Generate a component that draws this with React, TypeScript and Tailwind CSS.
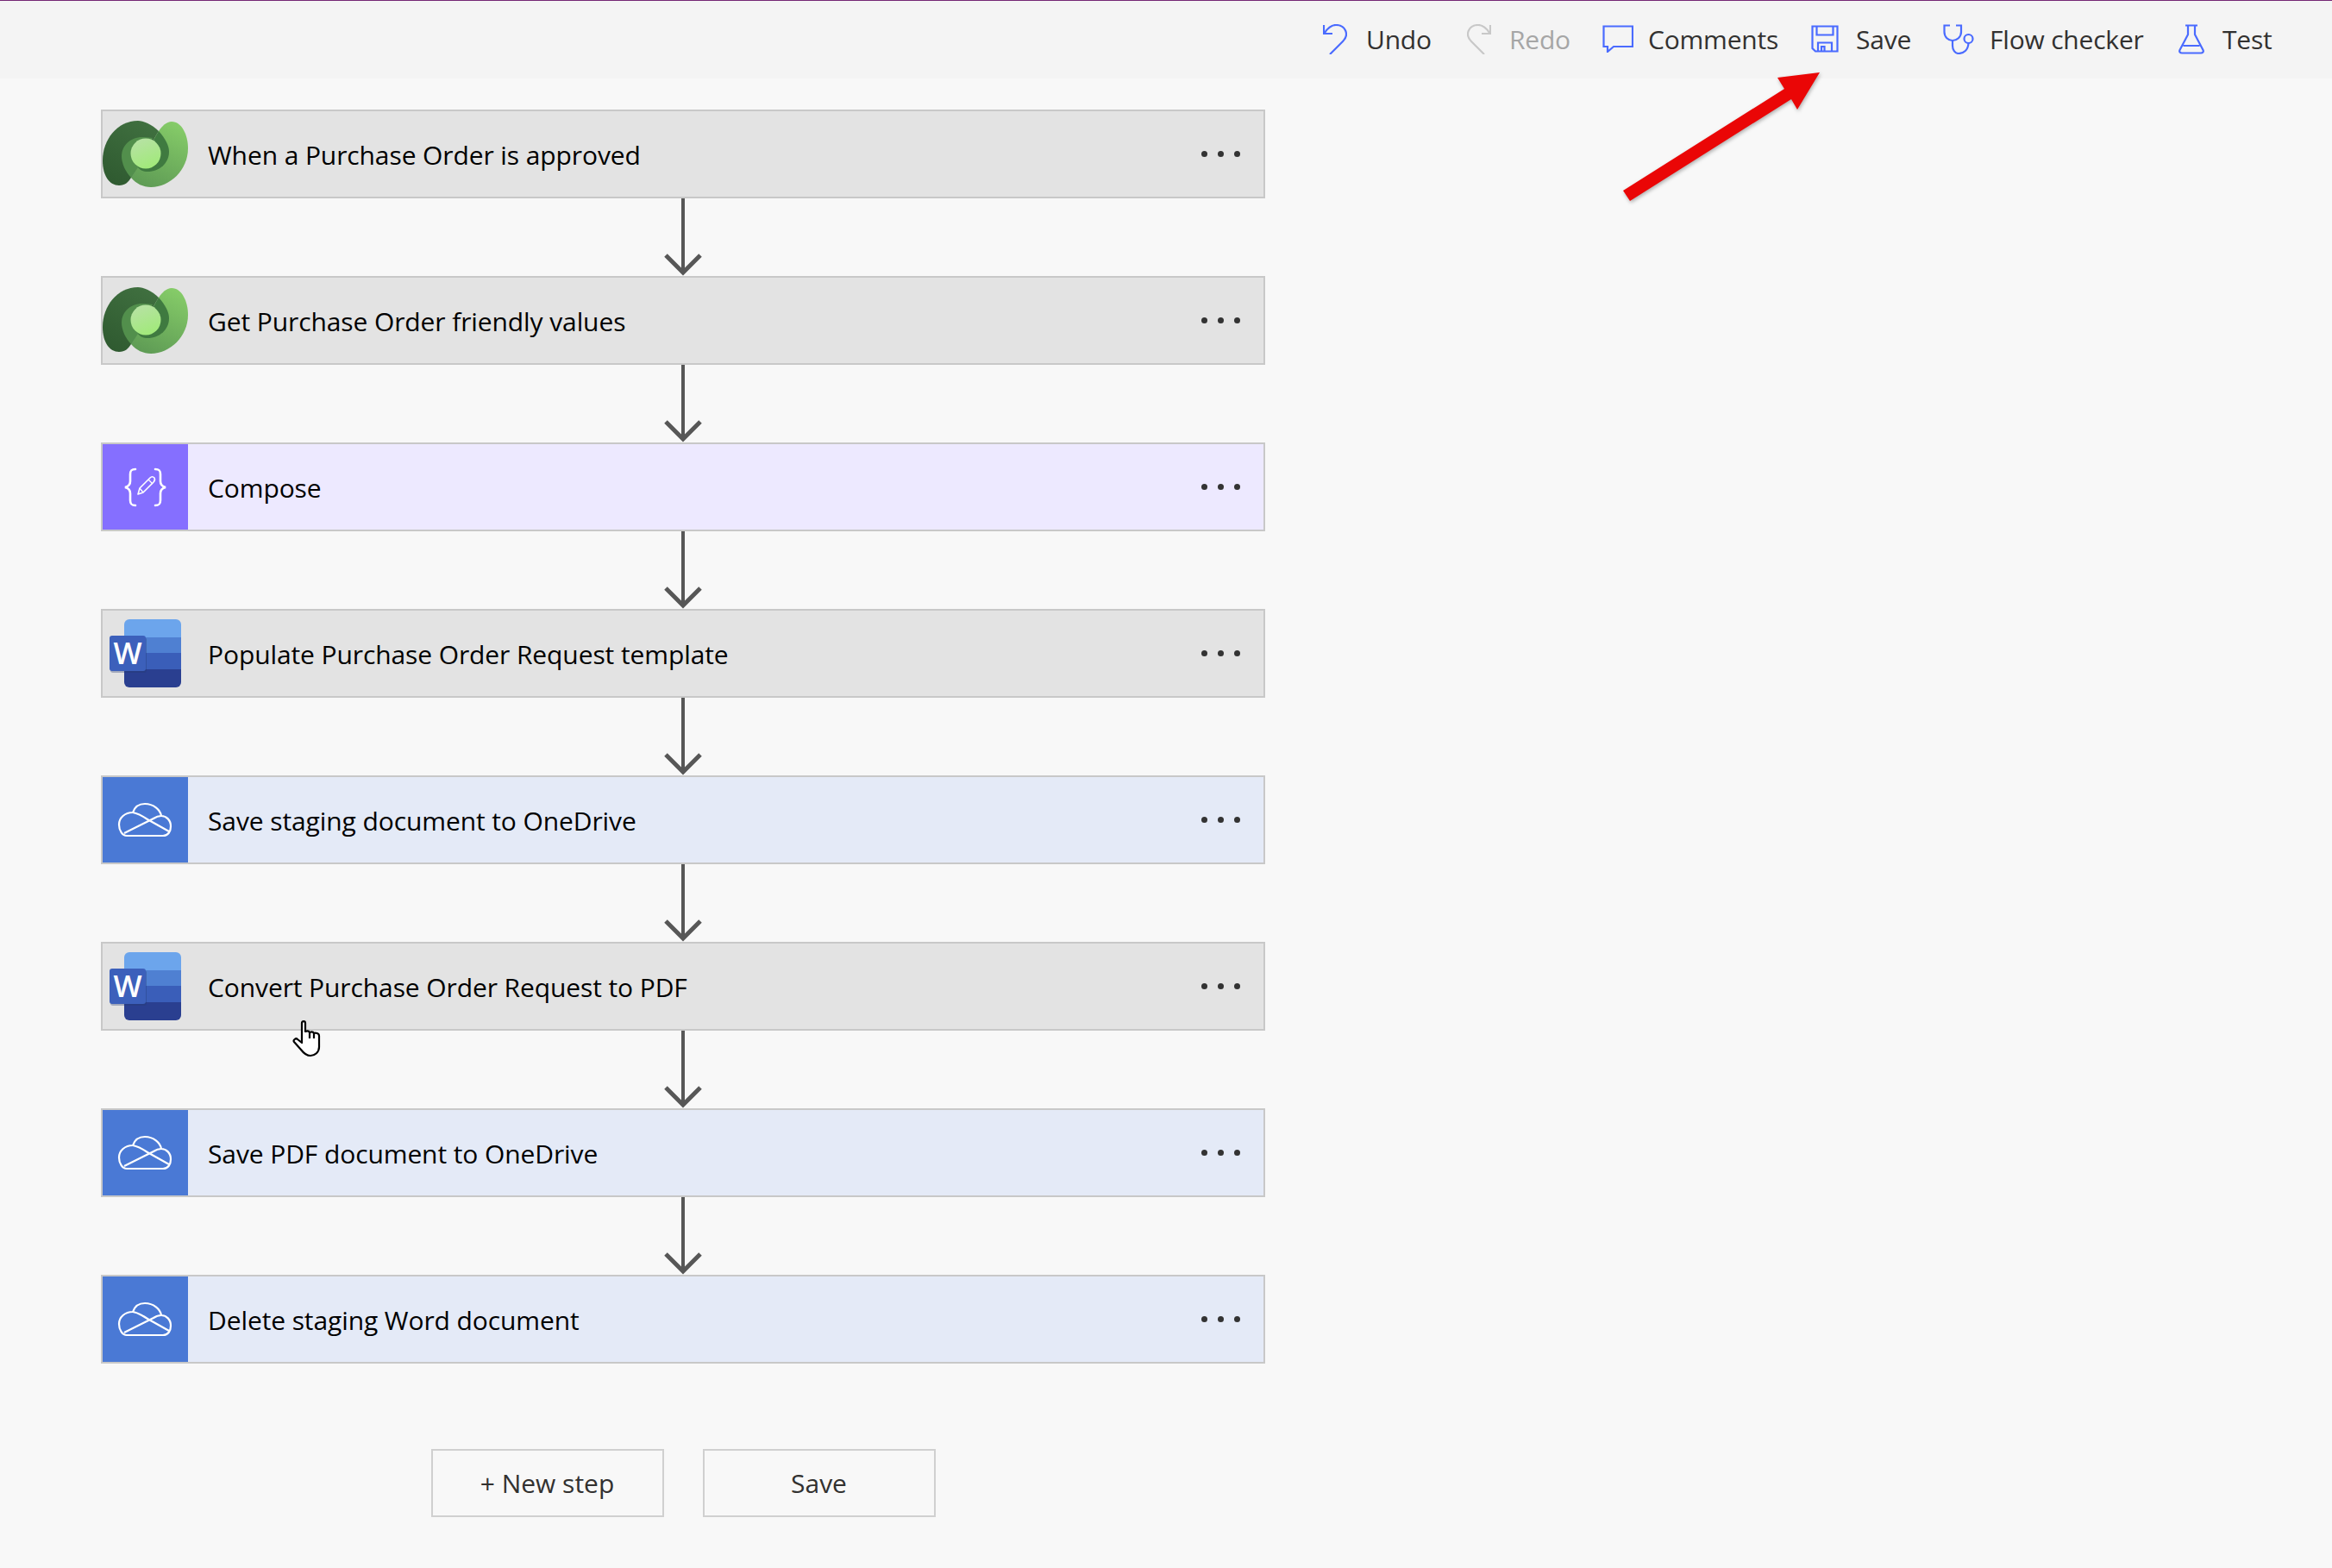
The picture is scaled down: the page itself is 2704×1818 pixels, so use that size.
import { Fragment, type ReactNode } from "react";

function DataverseIcon({ id }: { id: string }) {
  return (
    <svg viewBox="0 0 99 99" className="w-[99px] h-[99px]">
      <defs>
        <linearGradient id={`dark-${id}`} x1="0.7" y1="0" x2="0.2" y2="1">
          <stop offset="0" stopColor="#3f6f3f" />
          <stop offset="1" stopColor="#2f5a30" />
        </linearGradient>
        <linearGradient id={`light-${id}`} x1="0.7" y1="0" x2="0.3" y2="1">
          <stop offset="0" stopColor="#85cb68" />
          <stop offset="1" stopColor="#5f9c55" />
        </linearGradient>
        <linearGradient id={`core-${id}`} x1="0.3" y1="0" x2="0.7" y2="1">
          <stop offset="0" stopColor="#b7e2a4" />
          <stop offset="1" stopColor="#a0ea78" />
        </linearGradient>
      </defs>
      <path
        d="M65 23C69 17 74 12 80 12C92 12 99 28 99 43C99 68 78 88 56 88C47 88 39 84 33 77Z"
        fill={`url(#light-${id})`}
      />
      <path
        d="M65 23C57 15 47 11 41 11C17 11 0 33 0 57C0 75 8 86 19 86C26 86 30 82 33 77Z"
        fill={`url(#dark-${id})`}
      />
      <path d="M65 23C73 32 77 40 77 47C77 60 66 70 52 70C47 70 43 68 41 65Z" fill="#3f7a40" />
      <path d="M58 31C53 30 49 30 46 30C32 30 22 40 22 52C22 61 27 71 33 77L41 65Z" fill="#528f4c" />
      <circle cx="50" cy="49" r="17.5" fill={`url(#core-${id})`} />
    </svg>
  );
}

function WordIcon() {
  return (
    <svg viewBox="0 0 99 99" className="w-[99px] h-[99px]">
      <defs>
        <clipPath id="word-doc">
          <rect x="25" y="10" width="66" height="79" rx="6" />
        </clipPath>
      </defs>
      <g clipPath="url(#word-doc)">
        <rect x="25" y="10" width="66" height="21" fill="#6ca5ec" />
        <rect x="25" y="31" width="66" height="18" fill="#4f80d2" />
        <rect x="25" y="49" width="66" height="19" fill="#3a5eb9" />
        <rect x="25" y="68" width="66" height="21" fill="#2a3f90" />
      </g>
      <rect x="9" y="31" width="42" height="41" rx="3" fill="#24386f" opacity="0.35" />
      <rect x="8" y="29" width="42" height="41" rx="3" fill="#3c60bb" />
      <text x="29" y="62" textAnchor="middle" fill="#ffffff" fontFamily="Open Sans" fontWeight="600" fontSize="35">
        W
      </text>
    </svg>
  );
}

function ComposeIcon() {
  return (
    <div className="w-[99px] h-[99px] bg-[#856fff]">
      <svg viewBox="0 0 99 99" className="w-[99px] h-[99px]" fill="none" stroke="#ffffff">
        <path
          strokeWidth="2.6"
          strokeLinecap="round"
          d="M38 29C33 29 32 31 32 35V43C32 47 30 49 26 50C30 51 32 53 32 57V65C32 69 33 71 38 71"
        />
        <path
          strokeWidth="2.6"
          strokeLinecap="round"
          d="M61 29C66 29 67 31 67 35V43C67 47 69 49 73 50C69 51 67 53 67 57V65C67 69 66 71 61 71"
        />
        <path strokeWidth="1.6" strokeLinejoin="round" d="M41 58L43 51L55 39C57 37 59 38 60 39C61 41 61 42 59 44L47 56Z" />
        <path strokeWidth="1.3" d="M43 51L47 56M53 41L58 46" />
      </svg>
    </div>
  );
}

function OneDriveIcon() {
  return (
    <div className="w-[99px] h-[99px] bg-[#4a79d5]">
      <svg viewBox="0 0 99 99" className="w-[99px] h-[99px]" fill="none" stroke="#ffffff" strokeWidth="2.2">
        <path d="M28 68H70C76 68 79 63 79 57C79 50 74 45 68 45C67 38 59 31 49 31C42 31 37 35 35 41C26 41 19 47 19 55C19 62 23 68 28 68Z" />
        <path d="M25 65L59 48C62 46 65 45 68 45M35 41C41 42 46 45 52 49L77 63" />
      </svg>
    </div>
  );
}

function UndoIcon({ color, mirrored = false }: { color: string; mirrored?: boolean }) {
  return (
    <svg
      viewBox="0 0 28 35"
      className={mirrored ? "w-[28px] h-[35px] -scale-x-100" : "w-[28px] h-[35px]"}
      fill="none"
      stroke={color}
      strokeWidth="2.2"
    >
      <path d="M8 35L23 20C31 12 26 1 15 1C10 1 6 4 2 10" />
      <path d="M1 1V11H11" />
    </svg>
  );
}

function CommentIcon() {
  return (
    <svg viewBox="0 0 36 32" className="w-[36px] h-[32px]" fill="none" stroke="#4a6bff" strokeWidth="2.2">
      <path d="M1.5 1.5H35V25H13L6 31V25H1.5Z" />
    </svg>
  );
}

function SaveIcon() {
  return (
    <svg viewBox="0 0 32 32" className="w-[32px] h-[32px]" fill="none" stroke="#4a6bff" strokeWidth="2.2">
      <path d="M1.5 1.5H30.5V30.5H5L1.5 27Z" />
      <path d="M6.5 1.5V11.5H25.5V1.5" />
      <path d="M8 30.5V20.5H24V30.5" />
      <path d="M12 30.5V25H15.5V30.5" />
    </svg>
  );
}

function FlowIcon() {
  return (
    <svg viewBox="0 0 36 35" className="w-[36px] h-[35px]" fill="none" stroke="#4a6bff" strokeWidth="2.2">
      <path d="M8 1.5H1.5V9C1.5 15 6 19 11 19C16 19 21 15 21 9V1.5H15" />
      <path d="M11 19V25C11 30 14 34 18 34C24 34 29 30 29.5 22" />
      <circle cx="29.5" cy="17" r="5" />
    </svg>
  );
}

function TestIcon() {
  return (
    <svg viewBox="0 0 30 35" className="w-[30px] h-[35px]" fill="none" stroke="#4a6bff" strokeWidth="2.2">
      <path d="M8 1.5H22M11 1.5V12L1.5 30C0.5 32 2 33.5 4 33.5H26C28 33.5 29.5 32 28.5 30L19 12V1.5M5.5 25H24.5" />
    </svg>
  );
}

function ToolbarItem({
  icon,
  label,
  boxClass,
  iconClass,
  textClass = "text-[#323130]",
}: {
  icon: ReactNode;
  label: string;
  boxClass: string;
  iconClass: string;
  textClass?: string;
}) {
  return (
    <div className={`flex items-center ${boxClass}`}>
      <div className={`flex items-center shrink-0 ${iconClass}`}>{icon}</div>
      <span className={`text-[30px] tracking-[-0.2px] whitespace-nowrap ${textClass}`}>{label}</span>
    </div>
  );
}

const steps = [
  { title: "When a Purchase Order is approved", kind: "dataverse" },
  { title: "Get Purchase Order friendly values", kind: "dataverse" },
  { title: "Compose", kind: "compose" },
  { title: "Populate Purchase Order Request template", kind: "word" },
  { title: "Save staging document to OneDrive", kind: "onedrive" },
  { title: "Convert Purchase Order Request to PDF", kind: "word" },
  { title: "Save PDF document to OneDrive", kind: "onedrive" },
  { title: "Delete staging Word document", kind: "onedrive" },
];

function StepCard({ title, kind, index }: { title: string; kind: string; index: number }) {
  const bg = kind === "compose" ? "bg-[#ede9ff]" : kind === "onedrive" ? "bg-[#e4eaf7]" : "bg-[#e3e3e3]";
  return (
    <div className={`flex items-center h-[103px] border-2 border-[#c8c8c8] ${bg}`}>
      <div className="w-[99px] h-[99px] shrink-0">
        {kind === "dataverse" && <DataverseIcon id={`step${index}`} />}
        {kind === "compose" && <ComposeIcon />}
        {kind === "word" && <WordIcon />}
        {kind === "onedrive" && <OneDriveIcon />}
      </div>
      <span className="ml-[23px] pt-[1px] text-[30px] tracking-[-0.1px] text-black whitespace-nowrap">{title}</span>
      <div className="ml-auto mr-[27px] flex gap-[12px]">
        <div className="w-[7px] h-[7px] rounded-full bg-[#333333]" />
        <div className="w-[7px] h-[7px] rounded-full bg-[#333333]" />
        <div className="w-[7px] h-[7px] rounded-full bg-[#333333]" />
      </div>
    </div>
  );
}

function Connector() {
  return (
    <div className="flex justify-center h-[90px]">
      <svg viewBox="0 0 48 90" className="w-[48px] h-[90px]" fill="none" stroke="#575757">
        <path d="M24 0V86" strokeWidth="4" />
        <path d="M4 66L24 86L44 66" strokeWidth="5" />
      </svg>
    </div>
  );
}

export default function App() {
  return (
    <div className="relative w-[2704px] h-[1818px] overflow-hidden bg-[#f8f8f8] font-['Open_Sans',sans-serif]">
      <div className="h-px bg-[#742774]" />

      {/* Top bar */}
      <div className="flex items-center justify-end h-[90px] pr-[51px] pb-[2px] bg-[#f4f4f4]">
        <ToolbarItem icon={<UndoIcon color="#4a6bff" />} label="Undo" boxClass="w-[167px]" iconClass="w-[50px]" />
        <ToolbarItem
          icon={<UndoIcon color="#c8c8c8" mirrored />}
          label="Redo"
          boxClass="w-[157px]"
          iconClass="w-[49px]"
          textClass="text-[#a6a6a6]"
        />
        <ToolbarItem icon={<CommentIcon />} label="Comments" boxClass="w-[242px]" iconClass="w-[53px]" />
        <ToolbarItem icon={<SaveIcon />} label="Save" boxClass="w-[153px]" iconClass="w-[52px]" />
        <ToolbarItem icon={<FlowIcon />} label="Flow checker" boxClass="w-[273px]" iconClass="w-[54px]" />
        <ToolbarItem icon={<TestIcon />} label="Test" boxClass="w-[127px]" iconClass="w-[51px]" />
      </div>

      {/* Steps */}
      <div className="w-[1350px] ml-[117px] mt-[36px]">
        {steps.map((step, i) => (
          <Fragment key={step.title}>
            <StepCard title={step.title} kind={step.kind} index={i} />
            {i < steps.length - 1 && <Connector />}
          </Fragment>
        ))}
        <div className="flex justify-center gap-[45px] mt-[99px]">
          <button className="w-[270px] h-[79px] border-2 border-[#d0d0d0] text-[30px] text-[#323130]">+ New step</button>
          <button className="w-[270px] h-[79px] border-2 border-[#d0d0d0] text-[30px] text-[#323130]">Save</button>
        </div>
      </div>

      {/* Red annotation arrow */}
      <svg viewBox="0 0 232 153" className="absolute left-[1880px] top-[82px] w-[232px] h-[153px] drop-shadow-[1px_2px_2px_rgba(0,0,0,0.3)]">
        <polygon points="2,139 189,21 181,8 230,2 204,45 197,33 10,151" fill="#ea0606" />
      </svg>

      {/* Mouse cursor */}
      <svg viewBox="0 0 33 43" className="absolute left-[339px] top-[1183px] w-[33px] h-[43px]" fill="#ffffff" stroke="#000000" strokeWidth="2.2" strokeLinejoin="round">
        <path d="M11 3C11 0.5 15 0.5 15 3V13C17 12 19 12 20 14C22 13 24 13 25 15C27 14 31 15 31 18V31C31 37 26 41 21 41C16 41 13 38 10 34L2 25C0.5 23 4 20 6 22L11 26Z" />
        <path d="M20 14V21M25 15V21" fill="none" />
      </svg>
    </div>
  );
}
